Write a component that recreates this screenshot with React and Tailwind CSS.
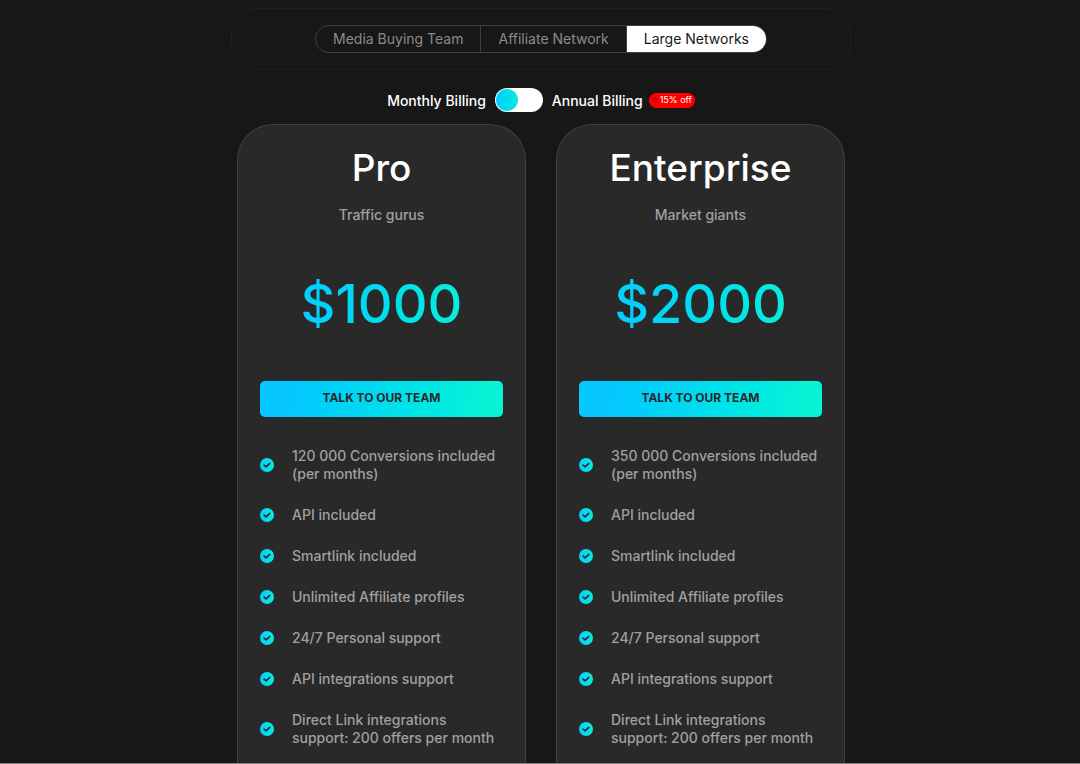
import { useState } from "react";

const tabs = ["Media Buying Team", "Affiliate Network", "Large Networks"];

const commonFeatures = [
  "API included",
  "Smartlink included",
  "Unlimited Affiliate profiles",
  "24/7 Personal support",
  "API integrations support",
  "Direct Link integrations support: 200 offers per month",
];

const plans = [
  {
    name: "Pro",
    tagline: "Traffic gurus",
    price: "$1000",
    features: ["120 000 Conversions included (per months)", ...commonFeatures],
  },
  {
    name: "Enterprise",
    tagline: "Market giants",
    price: "$2000",
    features: ["350 000 Conversions included (per months)", ...commonFeatures],
  },
];

function CheckIcon({ id }) {
  return (
    <svg viewBox="0 0 14 14" className="size-3.5 shrink-0" aria-hidden="true">
      <defs>
        <linearGradient id={id} x1="0" y1="0" x2="1" y2="0">
          <stop offset="0" stopColor="#08ccfe" />
          <stop offset="1" stopColor="#08ecdc" />
        </linearGradient>
      </defs>
      <circle cx="7" cy="7" r="7" fill={`url(#${id})`} />
      <path
        d="M4.1 7.1 6.1 8.8 9.8 5.3"
        fill="none"
        stroke="#292929"
        strokeWidth="1.6"
        strokeLinecap="round"
        strokeLinejoin="round"
      />
    </svg>
  );
}

function PlanCard({ plan }) {
  return (
    <article className="flex min-w-0 flex-1 flex-col rounded-t-[36px] border border-b-0 border-[#404040] bg-[#292929] px-[22px] pt-[21px] pb-3">
      <h2 className="text-center text-[37px] leading-[44px] font-medium text-white">{plan.name}</h2>
      <p className="mt-4 text-center text-[14px] leading-[18px] font-medium text-[#a0a0a0]">{plan.tagline}</p>
      <p className="mt-12 self-center bg-linear-to-r from-[#06ccff] to-[#0aeedb] bg-clip-text text-[54px] leading-[64px] font-medium text-transparent">
        {plan.price}
      </p>
      <button
        type="button"
        className="mt-[45px] h-9 rounded-[5px] bg-linear-100 from-[#06c8ff] from-15% to-[#08f2d8] to-90% pb-0.5 text-[12px] font-bold text-[#292929]"
      >
        TALK TO OUR TEAM
      </button>
      <ul className="mt-[30px] flex flex-col gap-[23px]">
        {plan.features.map((feature, i) => (
          <li key={feature} className="flex items-center gap-[18px] text-[14px] leading-[18px] font-medium text-[#a0a0a0]">
            <CheckIcon id={`check-${plan.name}-${i}`} />
            <span>{feature}</span>
          </li>
        ))}
      </ul>
    </article>
  );
}

export default function App() {
  const [active, setActive] = useState(2);
  const [annual, setAnnual] = useState(false);

  return (
    <main className="flex min-h-screen flex-col items-center border-b border-[#858282] bg-[#171717] pt-2 pl-0.5 font-['Inter','Liberation_Sans',sans-serif]">
      <div className="flex w-full max-w-[620px] justify-center rounded-[24px] border border-[#1f1f1f] py-4">
        <div role="tablist" className="flex h-7 overflow-hidden rounded-full border border-[#404040]">
          {tabs.map((tab, i) => (
            <button
              key={tab}
              type="button"
              role="tab"
              aria-selected={active === i}
              onClick={() => setActive(i)}
              className={`border-r border-[#404040] px-[17px] pb-0.5 text-[14px] last:border-r-0 ${
                active === i ? "bg-white text-[#171717]" : "text-[#8b8b8b]"
              }`}
            >
              {tab}
            </button>
          ))}
        </div>
      </div>

      <div className="mt-[18px] flex h-6 items-center text-[14px] font-medium text-white">
        <span>Monthly Billing</span>
        <label className="mx-[9px] flex h-6 w-12 cursor-pointer rounded-full bg-white p-px">
          <input
            type="checkbox"
            role="switch"
            aria-label="Annual billing"
            checked={annual}
            onChange={(e) => setAnnual(e.target.checked)}
            className="peer sr-only"
          />
          <span className="size-[22px] rounded-full bg-linear-to-r from-[#06ccff] to-[#0aecdc] peer-checked:ml-auto" />
        </label>
        <span>Annual Billing</span>
        <span className="ml-1.5 flex h-[15px] items-center gap-0.5 rounded-full bg-[#ff0000] px-[3px] text-[9px] font-normal">
          <svg viewBox="0 0 6 6" className="size-1.5" aria-hidden="true">
            <circle cx="3" cy="3" r="2.2" fill="#e00000" stroke="#a80000" strokeWidth="1" />
          </svg>
          15% off
        </span>
      </div>

      <section className="mt-3 flex w-full max-w-[608px] flex-1 gap-[30px]">
        {plans.map((plan) => (
          <PlanCard key={plan.name} plan={plan} />
        ))}
      </section>
    </main>
  );
}
